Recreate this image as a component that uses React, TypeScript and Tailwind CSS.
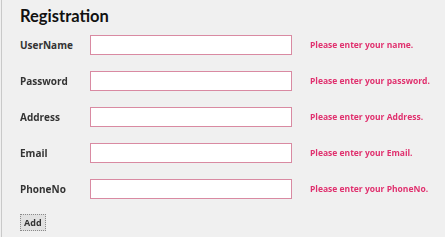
import { useState, type FC } from "react";

type Field = {
    label: string;
    name: string;
    message: string;
};

const fields: Field[] = [
    { label: "UserName", name: "username", message: "Please enter your name." },
    { label: "Password", name: "password", message: "Please enter your password." },
    { label: "Address", name: "address", message: "Please enter your Address." },
    { label: "Email", name: "email", message: "Please enter your Email." },
    { label: "PhoneNo", name: "phone", message: "Please enter your PhoneNo." },
];

const FieldRow: FC<{ field: Field; autoFocus?: boolean }> = ({ field, autoFocus }) => {
    const [value, setValue] = useState("");
    return (
        <div className="flex items-center h-[20px]">
            <label className="w-[70px] text-[10px] font-bold text-[#333333]">{field.label}</label>
            <input
                name={field.name}
                type={field.name == "password" ? "password" : "text"}
                value={value}
                autoFocus={autoFocus}
                onChange={(e) => setValue(e.target.value)}
                className="w-[202px] h-[20px] bg-white border border-[#d98aa2] outline-none px-1 text-[10px] caret-[#555]"
            />
            <span className="ml-[18px] text-[8.5px] font-bold text-[#e0306e] whitespace-nowrap">{field.message}</span>
        </div>
    );
};

const App: FC = () => {
    return (
        <section
            className="w-[445px] h-[237px] bg-[#f0f0f0] overflow-hidden"
            style={{ fontFamily: '"Open Sans", "Noto Sans", sans-serif' }}
        >
            <section className="h-full ml-[1px] border-l border-[#c9c9c9] pl-[18px] pt-[5px]">
                <h1 className="font-bold text-[16.5px] leading-[22px] text-[#111111] font-['Lato',sans-serif]">Registration</h1>
                <section className="flex flex-col gap-4 mt-[8px]">
                    {fields.map((f, i) => (
                        <FieldRow key={f.name} field={f} autoFocus={i == 0} />
                    ))}
                </section>
                <button className="mt-[15px] h-[17px] px-[3px] bg-[#e1e1e1] border border-dotted border-[#8a8a8a] text-[9px] font-bold text-[#333333] leading-none">
                    Add
                </button>
            </section>
        </section>
    );
};

export default App;
